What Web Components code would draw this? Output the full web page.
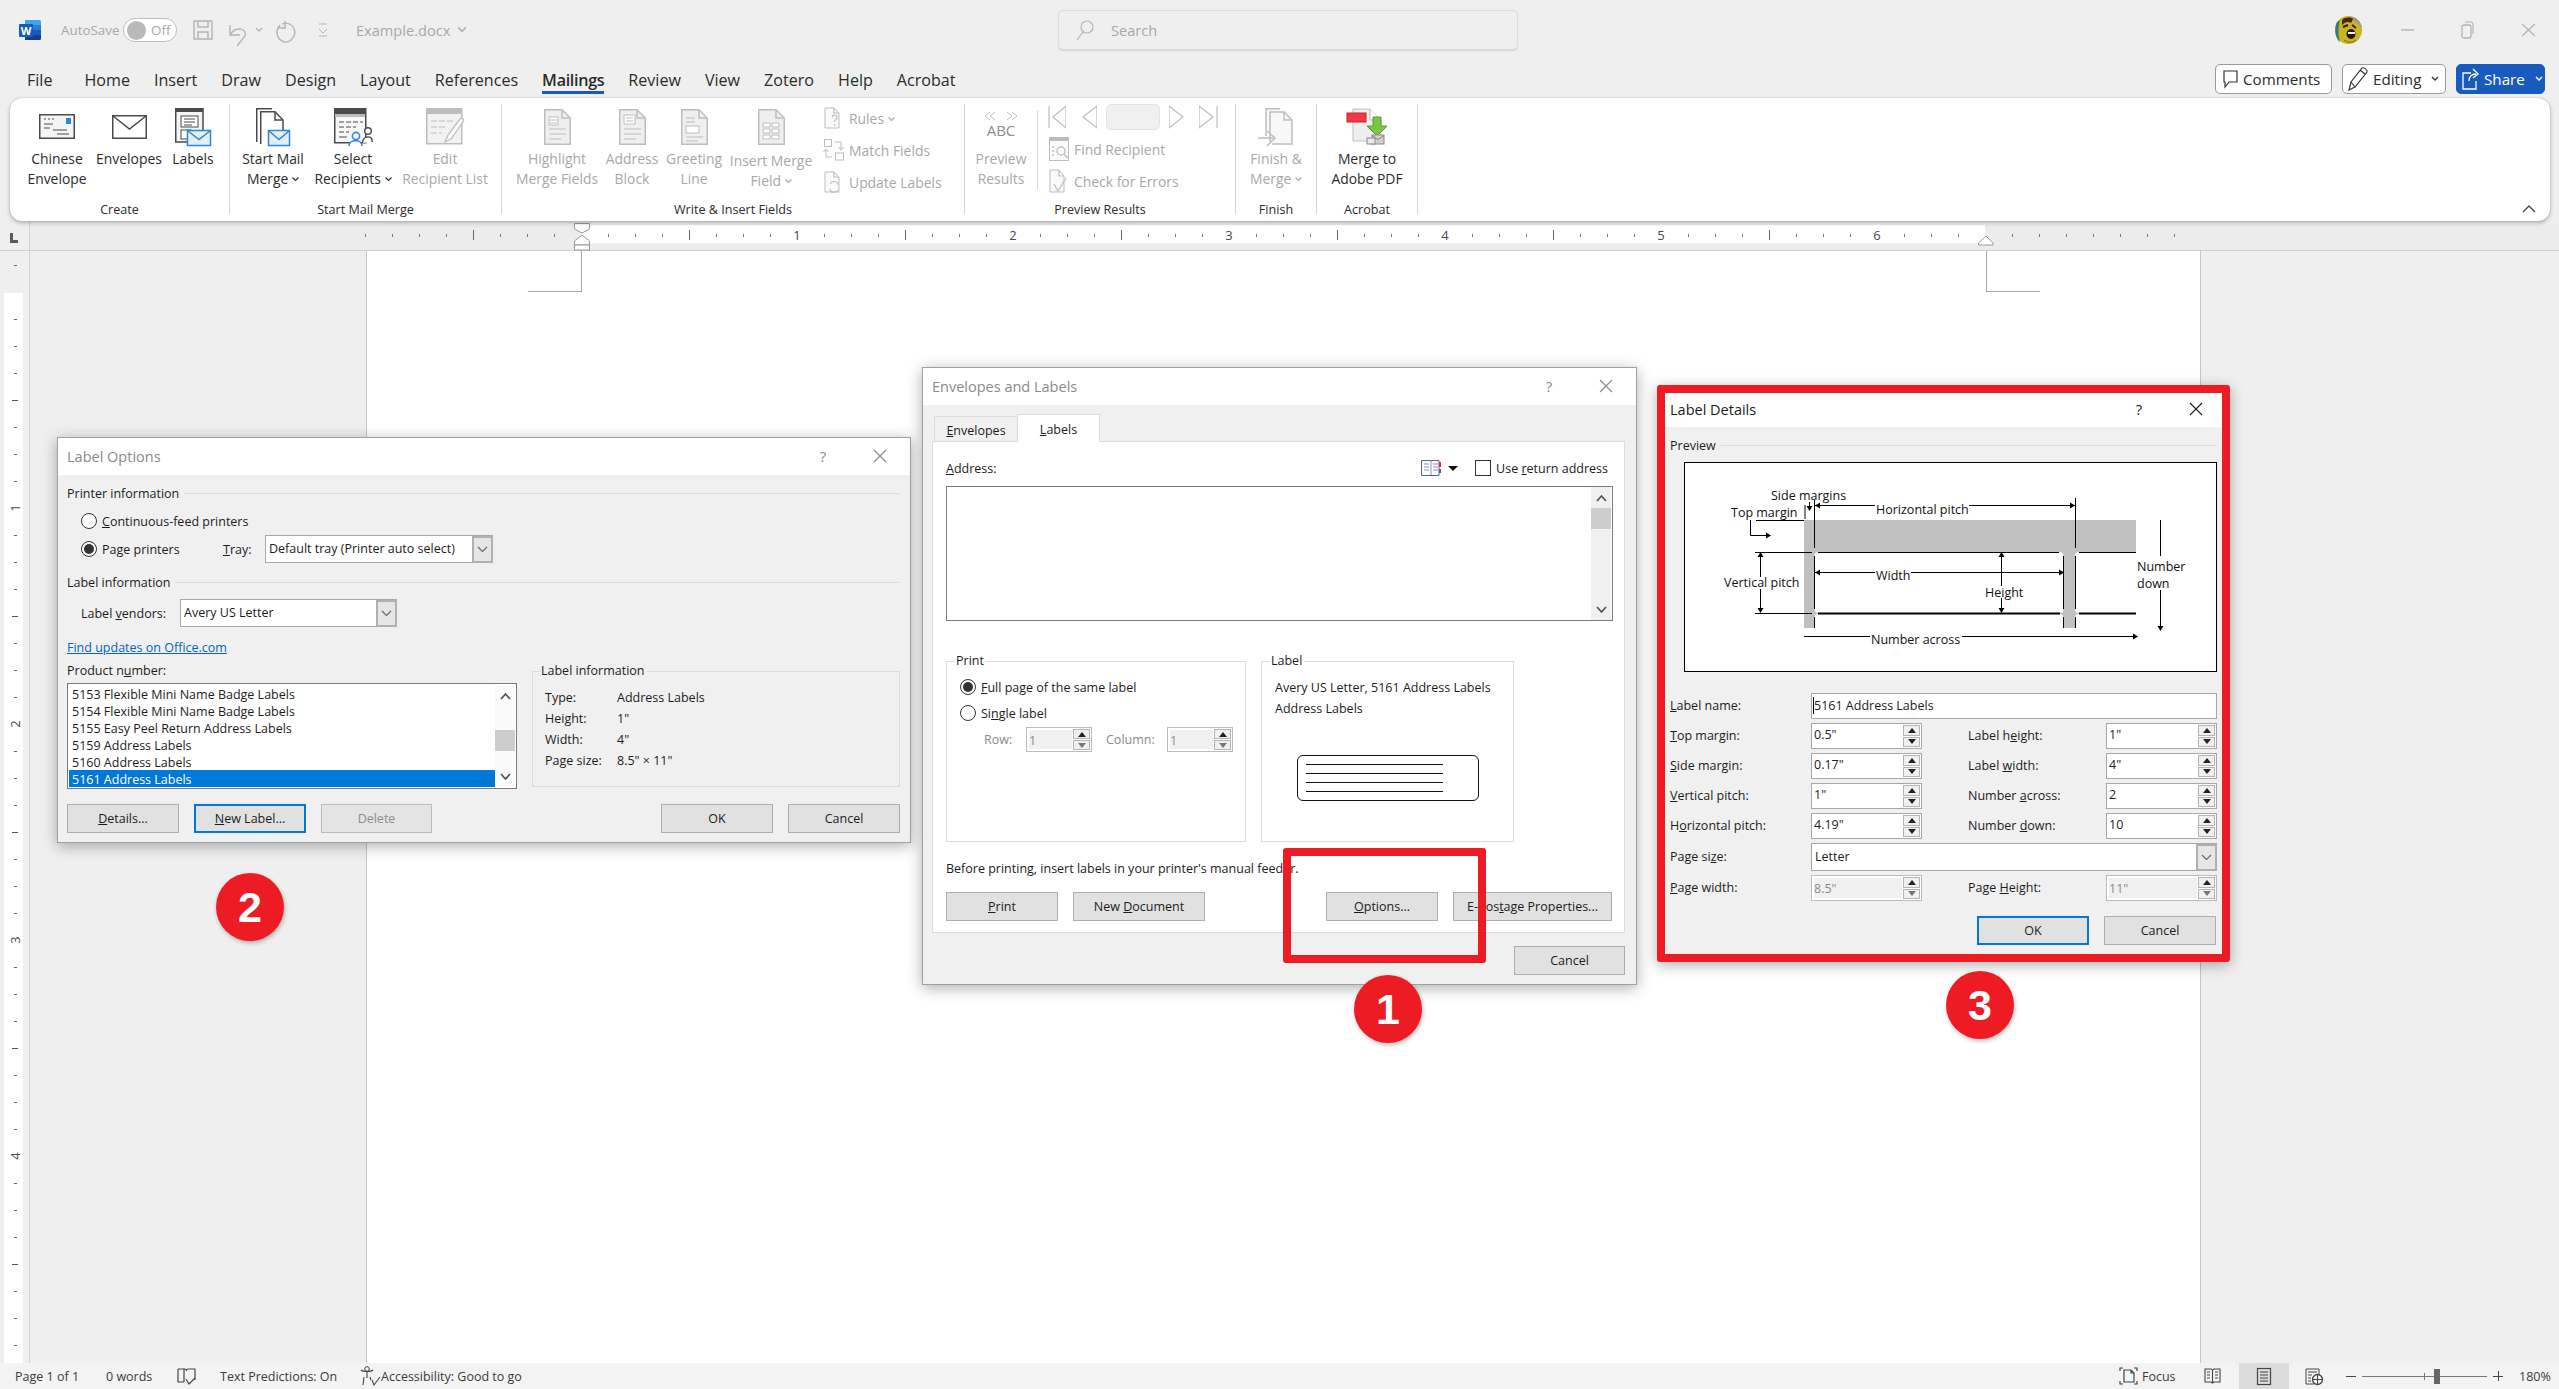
<!DOCTYPE html>
<html lang="en">
<head>
<meta charset="utf-8">
<title>Example.docx - Word</title>
<style>
  html, body { margin:0; padding:0; background:#efefef; }
</style>
</head>
<body>
<word-app>
  <word-titlebar></word-titlebar>
  <word-tabs></word-tabs>
  <word-ribbon>
    <r-group label="Create" w="220" pad="12">
      <r-btn w="70" icon="chinese">Chinese<br>Envelope</r-btn>
      <r-btn w="74" icon="envelope">Envelopes</r-btn>
      <r-btn w="54" icon="labels">Labels</r-btn>
    </r-group>
    <r-group label="Start Mail Merge" w="272">
      <r-btn w="86" icon="startmerge">Start Mail<br>Merge <r-caret></r-caret></r-btn>
      <r-btn w="74" icon="recipients">Select<br>Recipients <r-caret></r-caret></r-btn>
      <r-btn w="110" icon="editlist" disabled>Edit<br>Recipient List</r-btn>
    </r-group>
    <r-group label="Write &amp; Insert Fields" w="463" pad="10">
      <r-btn w="90" icon="highlight" disabled>Highlight<br>Merge Fields</r-btn>
      <r-btn w="60" icon="address" disabled>Address<br>Block</r-btn>
      <r-btn w="64" icon="greeting" disabled>Greeting<br>Line</r-btn>
      <r-btn w="90" icon="insertfield" shift="2" disabled>Insert Merge<br>Field <r-caret></r-caret></r-btn>
      <r-stack>
        <r-small pad="8" icon="rules" disabled>Rules <r-caret></r-caret></r-small>
        <r-small pad="8" icon="match" disabled>Match Fields</r-small>
        <r-small pad="8" icon="update" disabled>Update Labels</r-small>
      </r-stack>
    </r-group>
    <r-group label="Preview Results" w="271">
      <r-btn w="72" icon="abc" disabled>Preview<br>Results</r-btn>
      <r-stack line>
        <r-nav></r-nav>
        <r-small pad="11" icon="find" disabled>Find Recipient</r-small>
        <r-small pad="11" icon="check" disabled>Check for Errors</r-small>
      </r-stack>
    </r-group>
    <r-group label="Finish" w="81">
      <r-btn w="80" icon="finish" disabled>Finish &amp;<br>Merge <r-caret></r-caret></r-btn>
    </r-group>
    <r-group label="Acrobat" w="101">
      <r-btn w="100" icon="pdf">Merge to<br>Adobe PDF</r-btn>
    </r-group>
  </word-ribbon>
  <word-ruler></word-ruler>
  <word-workspace></word-workspace>
  <word-status></word-status>

  <label-options-dialog></label-options-dialog>
  <envelopes-dialog></envelopes-dialog>
  <label-details-dialog></label-details-dialog>

  <red-box style="left:1283px;top:848px;width:203px;height:115px"></red-box>
  <step-badge n="1" style="left:1354px;top:975px"></step-badge>
  <step-badge n="2" style="left:216px;top:873px"></step-badge>
  <step-badge n="3" style="left:1946px;top:971px"></step-badge>
</word-app>

<script>
(()=>{
  const FONT = `"Open Sans","Noto Sans",sans-serif`;
  const line = `fill="none" stroke="currentColor"`;
  const chev = (d)=>`<path d="${d}" fill="none" stroke="currentColor" stroke-width="1.4"/>`;
  const blueEnv = (x,y,w,h)=>`<rect x="${x+.5}" y="${y+.5}" width="${w-1}" height="${h-1}" fill="#e3f0fb" stroke="#2b88d8" stroke-width="1.5"/><path d="M${x+1} ${y+1}L${x+w/2} ${y+h*.6}L${x+w-1} ${y+1}" fill="none" stroke="#2b88d8" stroke-width="1.5"/>`;
  const foldDoc = `<path d="M.75.75H18L26.25 9V35.25H.75Z" fill="#efefef" ${line} stroke-width="1.5"/><path d="M18 .75V9H26.25" ${line} stroke-width="1.5"/>`;

  const ICONS = {
    chinese:[36,25,`<rect x=".75" y=".75" width="34.5" height="23.5" fill="#f4f4f4" ${line} stroke-width="1.5"/><rect x="27" y="4" width="5" height="6" fill="#2b88d8"/><path d="M5 5h2M9 5h2M13 5h2M5 10h9M5 14h6M14 16h14M18 20h12" ${line}/>`],
    envelope:[35,24,`<rect x=".75" y=".75" width="33.5" height="22.5" fill="#fff" ${line} stroke-width="1.5"/><path d="M1 1L17.5 14L34 1" ${line} stroke-width="1.5"/>`],
    labels:[36,38,`<path d="M.75 .75H28V34H.75Z" fill="#f5f5f5" ${line} stroke-width="1.5"/><rect x="1" y="1" width="27" height="3" fill="currentColor"/><rect x="6" y="8" width="17" height="11" fill="#fff" ${line}/><path d="M9 11h11M9 14h11M9 17h8" ${line}/><rect x="6" y="22" width="10" height="9" fill="#fff" ${line}/>${blueEnv(12,22,24,16)}`],
    startmerge:[34,38,`<path d="M.75 34V.75H16" ${line} stroke-width="1.5"/><path d="M4.75 36V3.75H19L27 12V22" fill="#fff" ${line} stroke-width="1.5"/><path d="M19 3.75V12H27" ${line} stroke-width="1.5"/>${blueEnv(12,22,22,16)}`],
    recipients:[38,38,`<rect x=".75" y=".75" width="31" height="34" fill="#f8f8f8" ${line} stroke-width="1.5"/><rect x="1" y="1" width="30" height="5" fill="currentColor"/><rect x="1" y="6" width="30" height="3" fill="#bbb"/><path d="M5 14h5M12 14h5M19 14h5M26 14h3M5 19h5M12 19h5M19 19h3M5 24h5M12 24h3M5 29h8" ${line}/><circle cx="34" cy="23" r="3.3" fill="#fff" ${line} stroke-width="1.4"/><path d="M28.500 35c0-8 11-8 9.500-1" fill="#fff" ${line} stroke-width="1.4"/><circle cx="22" cy="28" r="3.600" fill="#fff" stroke="#2b88d8" stroke-width="1.6"/><path d="M15 38c0-7 13-7 13 0" fill="#fff" stroke="#2b88d8" stroke-width="1.6"/>`],
    editlist:[38,38,`<rect x=".75" y=".75" width="35" height="35" fill="#f2f2f2" ${line} stroke-width="1.5"/><rect x="1" y="1" width="34" height="5" fill="currentColor"/><path d="M5 13h6M13 13h6M21 13h6M5 19h6M13 19h6M5 25h6M13 25h3" ${line}/><path d="M19 34L22 27L34 11C36 9 39 12 37 14L25 31Z" fill="#fff" ${line} stroke-width="1.3"/>`],
    highlight:[27,36,`${foldDoc}<rect x="5" y="8" width="9" height="8" fill="#fff" ${line}/><path d="M6 11h7M6 14h7M5 20h17M5 25h17M5 30h12" ${line}/>`],
    address:[27,36,`${foldDoc}<rect x="5" y="6" width="11" height="9" fill="#fff" ${line}/><path d="M7 9h7M7 12h7M5 20h17M5 25h17M5 30h12" ${line}/>`],
    greeting:[27,36,`${foldDoc}<path d="M5 9h9M5 13h9" ${line}/><rect x="5" y="17" width="13" height="7" fill="#fff" ${line}/><path d="M5 28h17M5 32h12" ${line}/>`],
    insertfield:[27,36,`${foldDoc}<path d="M5 14h7v4H5zM14 14h7v4h-7zM5 20h7v4H5zM14 20h7v4h-7zM5 26h7v4H5zM14 26h7v4h-7z" fill="#fff" ${line}/>`],
    rules:[18,22,`<path d="M1 1H10L15 6V21H1Z" fill="#fafafa" ${line}/><path d="M10 1V6H15M8 10c1-3 6-2 5 1c-.5 2-2.500 2-2.500 4M10.500 17v2" ${line} stroke-width="1.2"/>`],
    match:[20,22,`<rect x=".5" y=".5" width="7" height="7" fill="none" ${line}/><rect x="11.500" y="14" width="8" height="7" fill="none" ${line}/><path d="M11 3h6v7M14.500 8L17 11L19.500 8M8 18H2V11M-.5 13L2 10L4.500 13" ${line}/>`],
    update:[18,22,`<path d="M1 1H10L15 6V21H1Z" fill="#fafafa" ${line}/><path d="M10 1V6H15M6 13c2-4 8-3 8 1M14 19c-2 3-8 3-8-1" ${line} stroke-width="1.2"/>`],
    find:[20,24,`<rect x=".5" y=".5" width="19" height="23" fill="#fafafa" ${line}/><rect x="1" y="1" width="18" height="3" fill="currentColor"/><circle cx="12" cy="14" r="4" fill="#fff" ${line} stroke-width="1.3"/><path d="M15 17l3.500 4M3 10h2M3 14h2M3 18h2" ${line} stroke-width="1.3"/>`],
    check:[18,24,`<path d="M1 1H10L15 7V23H1Z" fill="#fafafa" ${line}/><path d="M10 1V7H15M5 15l4 7l8-13" ${line} stroke-width="1.2"/>`],
    abc:[40,36,`<path d="M9 3L4 7L9 11M14 3L9 7L14 11M26 3L31 7L26 11M31 3L36 7L31 11" ${line}/><text x="20" y="27" text-anchor="middle" font-size="15" fill="#8d8d8d" font-family='${FONT}'>ABC</text>`],
    finish:[36,38,`<path d="M8 28V.75H22M12 34V4H26L34 12V36H14" fill="#f8f8f8" ${line} stroke-width="1.5"/><path d="M26 4V12H34" ${line} stroke-width="1.5"/><path d="M0 30H15M9 23L17 30L9 38" ${line} stroke-width="1.5" fill="#fff"/>`],
    pdf:[42,38,`<path d="M7 1H24L35 12V33H7Z" fill="#eee" stroke="#bdbdbd"/><path d="M24 1V12H35" fill="#fff" stroke="#bdbdbd"/><rect x="1" y="5" width="19" height="9" fill="#ed3a45" stroke="#c22"/><path d="M27 9H35V18H41L31 28L21 18H27Z" fill="#7cc544" stroke="#5a9e2c"/><rect x="26" y="27" width="12" height="9" fill="#d0d0d0" stroke="#888"/><rect x="21" y="30" width="8" height="6" fill="#e8e8e8" stroke="#888"/><path d="M26 27.500l6 4l6-4" fill="none" stroke="#888"/>`],
    // title bar
    save:[20,20,`<path d="M1 1H19V19H1ZM5 1V7H15V1M5 19V12H15V19" ${line} stroke-width="1.4"/>`],
    undo:[20,26,`<path d="M2 14C8 4 20 8 17 15L9 25M2 4V14H12" ${line} stroke-width="1.4"/>`],
    redo:[22,24,`<path d="M7 4C18 1 24 12 16 20C10 25 2 20 2 12c0-3 1-5 3-7M10 1V8H3" ${line} stroke-width="1.4"/>`],
    chevdown:[8,6,chev("M1 1L4 4L7 1")],
    custom:[10,14,`<path d="M1 1h8M1 6L5 10L9 6M1 13h8" ${line}/>`],
    search:[18,22,`<circle cx="11" cy="8" r="6" ${line} stroke-width="1.2"/><path d="M7 13L1 21" ${line} stroke-width="1.2"/>`],
    min:[13,2,`<path d="M0 1h13" ${line} stroke-width="1.4"/>`],
    restore:[13,18,`<rect x="1" y="4" width="9" height="13" rx="2" ${line} stroke-width="1.3"/><path d="M4 1H10C12 1 12 2 12 4V13" ${line} stroke-width="1.2"/>`],
    close:[15,14,`<path d="M1 1L14 13M14 1L1 13" ${line} stroke-width="1.3"/>`],
    comment:[15,18,`<path d="M1 1H14V12H6L2 17V12H1Z" ${line} stroke-width="1.2"/>`],
    pencil:[20,24,`<path d="M1 23L3 15L14 1C16 0 20 3 19 5L7 20ZM3 15L7 20M12 3L17 7" ${line} stroke-width="1.2"/>`],
    share:[16,22,`<path d="M9 5H1V21H14V13M7 13C7 8 10 6 14 6M11 1L16 6L11 10" ${line} stroke-width="1.3"/>`],
    // status bar
    bookcheck:[19,17,`<path d="M1 1H8C9 1 9.500 2 9.500 3C9.500 2 10 1 11 1H18V12M1 1V14H7M7 1V14" ${line} stroke-width="1.2"/><path d="M9 11l3 5l6-6" ${line} stroke-width="1.2"/>`],
    person:[21,20,`<circle cx="7" cy="3" r="2.300" ${line}/><path d="M1 4C3 6 11 6 13 4M7 6v6M4 11l-1 8M10 11l1 3M12 14l2 5l6-8" ${line} stroke-width="1.100"/>`],
    focus:[19,18,`<path d="M1 4V1H4M15 1H18V4M1 14V17H4M15 17H18V14M5 3H12L15 6V15H5ZM12 3V6H15" ${line} stroke-width="1.2"/>`],
    read:[17,16,`<path d="M1 1H7L8.500 2L10 1H16V14H10L8.500 15L7 14H1ZM8.500 2V15M3 4h3M3 7h3M3 10h3M11 4h3M11 7h3M11 10h3" ${line} stroke-width="1.1"/>`],
    print:[14,17,`<rect x=".5" y=".5" width="13" height="16" ${line} stroke-width="1.200"/><path d="M3 4h8M3 7h8M3 10h8M3 13h8" ${line} stroke-width="1.200"/>`],
    web:[18,17,`<path d="M9 16H1V1H14V7" ${line}/><path d="M3 4h9M3 7h4M3 10h3M3 13h3" ${line}/><circle cx="12.500" cy="11.500" r="5" fill="#f3f3f3" stroke="#444" stroke-width="1.3"/><path d="M7.500 11.500h10M12.500 6.500v10" ${line}/>`]
  };

  const baseCss = `:host{box-sizing:border-box}*{box-sizing:border-box}`;
  const shadow = (el, css, html)=>{
    const root = el.attachShadow({mode:"open"});
    const template = document.createElement("template");
    template.innerHTML = `<style>${baseCss}${css}</style>${html}`;
    root.appendChild(template.content.cloneNode(true));
    return root;
  };

  class RIcon extends HTMLElement {
    connectedCallback(){
      const [w,h,body] = ICONS[this.getAttribute("name")];
      shadow(this, `:host{display:inline-flex;flex:none;color:var(--icon,#4a4a4a)}svg{display:block;overflow:visible}`,
        `<svg width="${w}" height="${h}" viewBox="0 0 ${w} ${h}" aria-hidden="true">${body}</svg>`);
    }
  }
  customElements.define("r-icon",RIcon);

  class WordApp extends HTMLElement {
    connectedCallback(){
      shadow(this, `:host{display:flex;flex-direction:column;position:relative;width:2559px;height:1389px;overflow:hidden;
        background:#efefef;font-family:${FONT};color:#262626}`, `<slot></slot>`);
    }
  }

  class WordTitlebar extends HTMLElement {
    connectedCallback(){
      shadow(this, `
        :host{display:flex;align-items:center;height:60px;padding-left:19px;flex:none;--icon:#b4b4b4;color:#a8a8a8;font-size:13.4px}
        .word{width:22px;height:20px;display:block}
        .auto{width:62px;margin-left:20px}
        .toggle{display:flex;align-items:center;width:54px;height:24px;border:1px solid #bdbdbd;border-radius:12px;background:#fff;padding-left:3px;gap:5px;margin-right:16px}
        .knob{width:19px;height:19px;border-radius:50%;background:#b9b9b9}
        .doc{width:100px;margin-left:28px;font-size:14.6px}
        .search{display:flex;align-items:center;width:460px;height:40px;margin-left:592px;padding-left:17px;gap:17px;font-size:14.6px;
          border:1px solid #dcdcdc;border-radius:5px;box-shadow:0 1px 1px #cfcfcf}
        svg.face{margin-left:817px;width:27px;height:28px;display:block}
      `,`
        <svg class="word" viewBox="0 0 22 20">
          <path d="M6 0H20.500Q22 0 22 1.500V5H6Z" fill="#41a5ee"/><rect x="6" y="5" width="16" height="5" fill="#2b7cd3"/>
          <rect x="6" y="10" width="16" height="5" fill="#185abd"/><path d="M6 15H22V18.500Q22 20 20.500 20H6Z" fill="#103f91"/>
          <rect x="0" y="4" width="14" height="13" rx="1" fill="#185abd"/>
          <text x="7" y="14.500" text-anchor="middle" font-size="11" font-weight="700" fill="#fff" font-family='${FONT}'>W</text>
        </svg>
        <span class="auto">AutoSave</span>
        <span class="toggle"><span class="knob"></span>Off</span>
        <r-icon name="save"></r-icon>
        <r-icon name="undo" style="margin-left:15px;margin-top:8px"></r-icon>
        <r-icon name="chevdown" style="margin-left:7px"></r-icon>
        <r-icon name="redo" style="margin-left:12px;margin-top:4px"></r-icon>
        <r-icon name="custom" style="margin-left:21px"></r-icon>
        <span class="doc">Example.docx</span>
        <r-icon name="chevdown" style="margin-left:2px;transform:scale(1.3)"></r-icon>
        <span class="search"><r-icon name="search"></r-icon>Search</span>
        <svg class="face" viewBox="0 0 27 28">
          <ellipse cx="13.500" cy="14" rx="13.500" ry="14" fill="#c9b422"/>
          <path d="M2 6C-1 12 0 22 5 26C3 20 3 12 5 4Z" fill="#2e8072"/><path d="M13 1C20 0 26 5 27 12C22 6 18 4 13 1Z" fill="#a09a84"/>
          <path d="M7 4C10 1 15 1 18 3L16 7C13 5 10 6 7 9Z" fill="#4a2a12"/><path d="M8 11l5-2M17 9l4 3" stroke="#3a1c0c" stroke-width="2"/>
          <ellipse cx="16" cy="18" rx="4.500" ry="5" fill="#2b1108"/><path d="M13 16h7v2h-7z" fill="#f5f0e6"/><path d="M9 24C13 27 18 27 21 24" stroke="#7a6a10" fill="none"/>
        </svg>
        <r-icon name="min" style="margin-left:39px"></r-icon>
        <r-icon name="restore" style="margin-left:47px"></r-icon>
        <r-icon name="close" style="margin-left:47px"></r-icon>`);
    }
  }

  class WordTabs extends HTMLElement {
    connectedCallback(){
      const names = ["File","Home","Insert","Draw","Design","Layout","References","Mailings","Review","View","Zotero","Help","Acrobat"];
      shadow(this, `
        :host{display:flex;height:38px;flex:none;padding-left:27px;padding-right:14px;font-size:16.1px;color:#2b2b2b}
        .tab{position:relative;margin-right:24px;height:34px;line-height:40px;white-space:nowrap}
        .tab.first{margin-right:32px}
        .tab.on{font-weight:600;letter-spacing:-.3px}
        .tab.on::after{content:"";position:absolute;left:0;right:0;top:31px;height:3px;background:#185abd}
        .right{margin-left:auto;display:flex;gap:10px;padding-top:4px;--icon:#333}
        .b{display:flex;align-items:center;height:30px;border:1px solid #9a9a9a;border-radius:5px;background:#fff;font-size:15.200px;white-space:nowrap}
        .share{background:#185abd;border-color:#185abd;color:#fff;--icon:#fff;width:89px;padding-left:5px;gap:6px}
      `,`
        ${names.map((n,i)=>`<span class="tab${i===0?" first":""}${n==="Mailings"?" on":""}">${n}</span>`).join("")}
        <div class="right">
          <span class="b" style="width:117px;padding-left:7px;gap:5px"><r-icon name="comment"></r-icon>Comments</span>
          <span class="b" style="width:104px;padding-left:5px;gap:5px"><r-icon name="pencil"></r-icon>Editing<r-icon name="chevdown" style="margin-left:5px;--icon:#333"></r-icon></span>
          <span class="b share"><r-icon name="share"></r-icon>Share<r-icon name="chevdown" style="margin-left:4px"></r-icon></span>
        </div>`);
    }
  }

  class WordRibbon extends HTMLElement {
    connectedCallback(){
      shadow(this, `
        :host{display:flex;flex:none;position:relative;z-index:2;height:123px;margin:0 9px 0 10px;padding-top:4px;
          background:#fff;border-radius:12px;box-shadow:0 0 1px #9c9c9c,0 2px 4px rgba(0,0,0,.28)}
        svg{position:absolute;right:14px;top:106px;color:#444}
      `,`<slot></slot><svg width="14" height="9" viewBox="0 0 14 9"><path d="M1 8L7 2L13 8" fill="none" stroke="currentColor" stroke-width="1.400"/></svg>`);
    }
  }

  class RGroup extends HTMLElement {
    connectedCallback(){
      this.style.width = this.getAttribute("w")+"px";
      shadow(this, `
        :host{display:flex;flex:none}
        .col{flex:1;min-width:0;display:flex;flex-direction:column}
        .body{display:flex;height:99px;padding-left:${this.getAttribute("pad")||0}px}
        .label{height:18px;line-height:18px;text-align:center;font-size:12.6px;color:#2b2b2b;white-space:nowrap}
        .sep{flex:none;width:1px;height:110px;margin-top:2px;background:#d6d6d6}
      `,`<div class="col"><div class="body"><slot></slot></div><div class="label">${this.getAttribute("label").replace("&","&amp;")}</div></div><div class="sep"></div>`);
    }
  }

  class RBtn extends HTMLElement {
    connectedCallback(){
      this.style.width = this.getAttribute("w")+"px";
      const shift = this.getAttribute("shift")||0;
      shadow(this, `
        :host{display:flex;flex-direction:column;align-items:center;flex:none;color:#2b2b2b}
        :host([disabled]){color:#a8a8a8;--icon:#bdbdbd}
        .icon{display:flex;align-items:center;justify-content:center;height:47px;padding-top:2px}
        .text{font-size:13.9px;line-height:20px;text-align:center;white-space:nowrap;padding-top:${shift}px}
      `,`<div class="icon"><r-icon name="${this.getAttribute("icon")}"></r-icon></div><div class="text"><slot></slot></div>`);
    }
  }

  class RCaret extends HTMLElement {
    connectedCallback(){
      shadow(this, `:host{display:inline-block;vertical-align:2px}svg{display:block}`,
        `<svg width="7" height="5" viewBox="0 0 7 5"><path d="M.5 .5L3.500 3.500L6.500 .5" fill="none" stroke="currentColor" stroke-width="1.100"/></svg>`);
    }
  }

  class RStack extends HTMLElement {
    connectedCallback(){
      shadow(this, `:host{display:flex;flex-direction:column;flex:none}
        :host([line]){position:relative;border-left:1px solid transparent}
        .v{position:absolute;left:-1px;top:9px;width:1px;height:78px;background:#d6d6d6}`,
        `${this.hasAttribute("line")?`<div class="v"></div>`:""}<slot></slot>`);
    }
  }

  class RSmall extends HTMLElement {
    connectedCallback(){
      shadow(this, `
        :host{display:flex;align-items:center;height:32px;padding-left:${this.getAttribute("pad")||0}px;font-size:13.9px;white-space:nowrap}
        :host([disabled]){color:#a8a8a8;--icon:#bdbdbd}
        .i{width:25px;display:flex}
      `,`<span class="i"><r-icon name="${this.getAttribute("icon")}"></r-icon></span><span><slot></slot></span>`);
    }
  }

  class RNav extends HTMLElement {
    connectedCallback(){
      shadow(this, `
        :host{display:flex;align-items:center;height:32px;padding-left:10px;color:#bdbdbd;margin-top:-1px}
        svg{display:block;flex:none}
        .box{width:54px;height:26px;margin:0 9px;background:#f0f0f0;border:1px solid #e2e2e2;border-radius:5px}
      `,`
        <svg width="18" height="24" viewBox="0 0 18 24"><path d="M1 1V23M18 1L5 12L18 23Z" fill="none" stroke="currentColor" stroke-width="1.200"/></svg>
        <svg width="15" height="24" viewBox="0 0 15 24" style="margin-left:16px"><path d="M15 1L1 12L15 23Z" fill="none" stroke="currentColor" stroke-width="1.200"/></svg>
        <span class="box"></span>
        <svg width="15" height="24" viewBox="0 0 15 24"><path d="M0 1L14 12L0 23Z" fill="none" stroke="currentColor" stroke-width="1.200"/></svg>
        <svg width="19" height="24" viewBox="0 0 19 24" style="margin-left:15px"><path d="M18 1V23M0 1L14 12L0 23Z" fill="none" stroke="currentColor" stroke-width="1.200"/></svg>`);
    }
  }

  class WordRuler extends HTMLElement {
    connectedCallback(){
      let ticks = "";
      for(let x=365, i=0; x<=2174; x+=27, i++){
        const inch = (x-581)%216===0 && x>=797 && x<=1877;
        const half = (x-689)%216===0;
        if(x===581 || x===1985) continue;
        if(inch) ticks += `<text x="${x}" y="19" text-anchor="middle" font-size="13" fill="#4a4a4a">${(x-581)/216}</text>`;
        else if(half) ticks += `<path d="M${x+.5} 9v10" stroke="#666"/>`;
        else ticks += `<path d="M${x+.5} 13v3" stroke="#777"/>`;
      }
      shadow(this, `:host{display:block;flex:none;height:30px}svg{display:block}`,`
        <svg width="2559" height="30" viewBox="0 0 2559 30" font-family='${FONT}'>
          <rect x="30" y="4" width="2529" height="25" fill="#ececec"/>
          <rect x="581" y="4" width="1404" height="18" fill="#fff"/>
          <path d="M0 29.500H2559" stroke="#cfcfcf"/><path d="M29.500 0V30" stroke="#d4d4d4"/>
          <path d="M10 12h3v7h5v3h-8z" fill="#5a5a5a"/>
          ${ticks}
          <g fill="#fff" stroke="#9a9a9a"><path d="M574.500 2.500H589.500V8L582 12L574.500 8Z"/><path d="M582 14L589.500 20V24H574.500V20Z"/><rect x="574.500" y="24" width="15" height="5"/><path d="M1986 15L1993 22V24H1978.500V22Z"/></g>
        </svg>`);
    }
  }

  class WordWorkspace extends HTMLElement {
    connectedCallback(){
      let ticks = "";
      for(let y=292-27*2; y<1363; y+=27){
        const t = y-251;
        if(t<0 || y===292) continue;
        const inch = (y-292)%216===0 && y>292;
        const half = (y-400)%216===0;
        if(inch) ticks += `<text transform="translate(15 ${t}) rotate(-90)" text-anchor="middle" y="4.500" font-size="13" fill="#4a4a4a">${(y-292)/216}</text>`;
        else if(half) ticks += `<path d="M12 ${t+.5}h6" stroke="#555"/>`;
        else ticks += `<path d="M14 ${t+.5}h3" stroke="#666"/>`;
      }
      shadow(this, `
        :host{display:flex;flex:none;height:1112px}
        svg{display:block;flex:none}
        .page{width:1835px;margin-left:336px;height:100%;background:#fff;border-left:1px solid #c6c6c6;border-right:1px solid #c6c6c6;display:flex;align-items:flex-start}
        .crop{height:41px;width:54px;border-bottom:1px solid #a8a8a8}
        .l{margin-left:161px;border-right:1px solid #a8a8a8}
        .r{margin-left:1404px;border-left:1px solid #a8a8a8}
      `,`
        <svg width="30" height="1112" viewBox="0 0 30 1112" font-family='${FONT}'>
          <rect x="4" y="42" width="19" height="1070" fill="#fff"/>
          <path d="M29.500 0V1112" stroke="#d4d4d4"/>
          ${ticks}
        </svg>
        <div class="page"><div class="crop l"></div><div class="crop r"></div></div>`);
    }
  }

  class WordStatus extends HTMLElement {
    connectedCallback(){
      shadow(this, `
        :host{display:flex;align-items:center;flex:none;height:26px;background:#f3f3f3;font-size:12.500px;color:#3a3a3a;--icon:#444;padding-left:15px;white-space:nowrap}
        .t{display:block}
        .view{width:50px;height:26px;margin-left:18px;background:#dcdcdc;display:flex;align-items:center;justify-content:center}
        .slider{position:relative;width:125px;height:1px;background:#777;margin:0 6px}
        .slider i{position:absolute;left:62px;top:-3px;width:1px;height:7px;background:#777}
        .slider b{position:absolute;left:72px;top:-7px;width:6px;height:15px;background:#666}
        .m{width:10px;height:1px;background:#444;position:relative}
        .m.p::after{content:"";position:absolute;left:4.500px;top:-4.500px;width:1px;height:10px;background:#444}
      `,`
        <span class="t" style="width:91px">Page 1 of 1</span>
        <span class="t" style="width:71px">0 words</span>
        <r-icon name="bookcheck"></r-icon>
        <span class="t" style="margin-left:24px;width:140px">Text Predictions: On</span>
        <r-icon name="person"></r-icon>
        <span class="t" style="width:1738px">Accessibility: Good to go</span>
        <r-icon name="focus"></r-icon>
        <span class="t" style="margin-left:4px;width:62px">Focus</span>
        <r-icon name="read"></r-icon>
        <span class="view"><r-icon name="print"></r-icon></span>
        <r-icon name="web" style="margin-left:16px"></r-icon>
        <span class="m" style="margin-left:23px"></span>
        <span class="slider"><i></i><b></b></span>
        <span class="m p"></span>
        <span class="t" style="margin-left:16px">180%</span>`);
    }
  }

  // dialog controls
  class WDialog extends HTMLElement {
    connectedCallback(){
      shadow(this, `
        :host{display:flex;flex-direction:column;width:100%;height:100%;background:#f0f0f0;border:1px solid #a0a0a0;
          box-shadow:0 3px 14px rgba(0,0,0,.32);font-size:12.500px;color:#1c1c1c}
        :host([marked]){border:8px solid #ed1c24;border-radius:3px}
        .title{flex:none;display:flex;align-items:center;height:37px;background:#fff;padding:0 0 1px 9px;font-size:14.500px;color:#8a8a8a}
        :host([marked]) .title{height:34px;padding:0 0 2px 5px;color:#1c1c1c}
        .q{margin-left:auto;width:54px;text-align:center;font-size:15px}
        .x{width:60px;display:flex;justify-content:center}
        :host([marked]) .q{width:62px}
        :host([marked]) .x{width:52px}
        svg{display:block}
      `,`
        <div class="title"><span>${this.getAttribute("heading")}</span><span class="q">?</span>
          <span class="x"><svg width="14" height="14" viewBox="0 0 14 14"><path d="M1 1L13 13M13 1L1 13" fill="none" stroke="currentColor" stroke-width="1.100"/></svg></span></div>
        <slot></slot>`);
    }
  }

  class WBtn extends HTMLElement {
    connectedCallback(){
      this.style.width = this.getAttribute("w")+"px";
      shadow(this, `
        :host{display:flex;align-items:center;justify-content:center;flex:none;height:29px;background:#e1e1e1;border:1px solid #adadad;white-space:nowrap;color:#1c1c1c}
        :host([primary]){border:2px solid #0078d7}
        :host([disabled]){color:#8c8c8c;background:#e4e4e4;border-color:#bcbcbc}
      `,`<span><slot></slot></span>`);
    }
  }

  class WHead extends HTMLElement {
    connectedCallback(){
      shadow(this, `:host{display:flex;align-items:center;gap:5px;height:18px;white-space:nowrap}i{flex:1;height:1px;background:#dcdcdc}`,`<span><slot></slot></span><i></i>`);
    }
  }

  class WRadio extends HTMLElement {
    connectedCallback(){
      shadow(this, `
        :host{display:inline-flex;align-items:center;gap:5px;height:18px;white-space:nowrap}
        b{flex:none;display:flex;align-items:center;justify-content:center;width:16px;height:16px;border-radius:50%;border:1px solid #333;background:#fff}
        :host([on]) b::after{content:"";width:10px;height:10px;border-radius:50%;background:#333}
      `,`<b></b><span><slot></slot></span>`);
    }
  }

  class WSpin extends HTMLElement {
    connectedCallback(){
      shadow(this, `
        :host{display:flex;height:26px;background:#fff;border:1px solid #a8a8a8;font-size:12.500px;min-width:0}
        :host([disabled]){color:#8a8a8a;border-color:#bcbcbc}
        :host([disabled]) .v{background:#f0f0f0;margin:2px 0 2px 2px;padding-left:0}
        .v{flex:1;line-height:22px;padding-left:2px;white-space:nowrap}
        .s{flex:none;width:19px;display:flex;flex-direction:column;gap:1px;padding:1px;margin-left:auto}
        .s b{flex:1;display:flex;align-items:center;justify-content:center;background:#f0f0f0;border:1px solid #b4b4b4}
        .s b::after{content:"";border:4px solid transparent;border-top:0;border-bottom:5px solid #222}
        .s b+b::after{border-top:5px solid #222;border-bottom:0}
        :host([disabled]) .s b+b::after{border-top-color:#777}
      `,`<span class="v">${this.getAttribute("value")||""}</span><span class="s"><b></b><b></b></span>`);
    }
  }

  class WSelect extends HTMLElement {
    connectedCallback(){
      shadow(this, `
        :host{display:flex;height:28px;background:#fff;border:1px solid #a8a8a8}
        .v{flex:1;line-height:26px;padding-left:3px;white-space:nowrap}
        .a{flex:none;width:21px;display:flex;align-items:center;justify-content:center;background:#e6e6e6;border:2px solid #b0b0b0;margin:0 -1px -1px 0;color:#666}
        svg{display:block}
      `,`<span class="v"><slot></slot></span><span class="a"><svg width="11" height="7" viewBox="0 0 11 7"><path d="M1 1L5.500 5.500L10 1" fill="none" stroke="currentColor" stroke-width="1.100"/></svg></span>`);
    }
  }

  class WScroll extends HTMLElement {
    connectedCallback(){
      shadow(this, `
        :host{display:flex;flex-direction:column;flex:none;width:20px;background:var(--track,#f0f0f0);color:#555}
        .b{flex:none;height:21px;display:flex;align-items:center;justify-content:center}
        .t{flex:none;height:21px;background:#cdcdcd;margin-top:${this.getAttribute("offset")||0}px}
        .b.d{margin-top:auto}
        svg{display:block}
      `,`
        <span class="b"><svg width="11" height="8" viewBox="0 0 11 8"><path d="M1 7L5.500 2L10 7" fill="none" stroke="currentColor" stroke-width="1.800"/></svg></span>
        <span class="t"></span>
        <span class="b d"><svg width="11" height="8" viewBox="0 0 11 8"><path d="M1 1L5.500 6L10 1" fill="none" stroke="currentColor" stroke-width="1.800"/></svg></span>`);
    }
  }

  const fieldsetCss = `
    fieldset{margin:0;border:1px solid #dcdcdc;min-width:0}
    legend{padding:0 2px 0 1px;margin-left:-5px;line-height:18px}
  `;

  class LabelOptionsDialog extends HTMLElement {
    connectedCallback(){
      shadow(this, `
        :host{position:absolute;left:57px;top:437px;width:854px;height:406px;z-index:5}
        ${fieldsetCss}
        .b{display:flex;flex-direction:column;padding:9px 10px 0 9px}
        .row{display:flex;align-items:center}
        .link{margin-top:12px;line-height:18px;color:#0563c1;text-decoration:underline}
        .cols{display:flex;gap:15px;margin-top:5px}
        .left{width:450px;flex:none}
        .list{display:flex;height:106px;margin-top:3px;border:1px solid #7a7a7a;background:#fff;padding:1px;--track:#fafafa}
        .items{flex:1}
        .items div{height:17px;line-height:19px;padding-left:3px}
        .items .sel{background:#0078d7;color:#fff}
        fieldset{width:368px;height:125px;padding:7px 0 0 12px}
        .kv{display:flex;line-height:21px}.kv span:first-child{width:72px}
        .btns{display:flex;gap:15px;margin-top:15px}
      `,`
      <w-dialog heading="Label Options">
        <div class="b">
          <w-head>Printer information</w-head>
          <div class="row" style="margin-top:10px;padding-left:14px"><w-radio><u>C</u>ontinuous-feed printers</w-radio></div>
          <div class="row" style="margin-top:5px;padding-left:14px">
            <w-radio on style="width:142px">Pa<u>g</u>e printers</w-radio>
            <span style="width:42px"><u>T</u>ray:</span>
            <w-select style="width:228px">Default tray (Printer auto select)</w-select>
          </div>
          <w-head style="margin-top:10px">Label information</w-head>
          <div class="row" style="margin-top:8px;padding-left:14px">
            <span style="width:99px">Label <u>v</u>endors:</span>
            <w-select style="width:217px">Avery US Letter</w-select>
          </div>
          <span class="link">Find updates on Office.com</span>
          <div class="cols">
            <div class="left">
              <div style="line-height:18px">Product n<u>u</u>mber:</div>
              <div class="list">
                <div class="items">
                  <div>5153 Flexible Mini Name Badge Labels</div>
                  <div>5154 Flexible Mini Name Badge Labels</div>
                  <div>5155 Easy Peel Return Address Labels</div>
                  <div>5159 Address Labels</div>
                  <div>5160 Address Labels</div>
                  <div class="sel">5161 Address Labels</div>
                </div>
                <w-scroll offset="24"></w-scroll>
              </div>
            </div>
            <fieldset><legend>Label information</legend>
              <div class="kv"><span>Type:</span><span>Address Labels</span></div>
              <div class="kv"><span>Height:</span><span>1"</span></div>
              <div class="kv"><span>Width:</span><span>4"</span></div>
              <div class="kv"><span>Page size:</span><span>8.5" × 11"</span></div>
            </fieldset>
          </div>
          <div class="btns">
            <w-btn w="112"><u>D</u>etails...</w-btn>
            <w-btn w="112" primary><u>N</u>ew Label...</w-btn>
            <w-btn w="111" disabled>Delete</w-btn>
            <w-btn w="112" style="margin-left:auto">OK</w-btn>
            <w-btn w="112">Cancel</w-btn>
          </div>
        </div>
      </w-dialog>`);
    }
  }

  class EnvelopesDialog extends HTMLElement {
    connectedCallback(){
      shadow(this, `
        :host{position:absolute;left:922px;top:367px;width:715px;height:618px;z-index:5}
        ${fieldsetCss}
        .b{display:flex;flex-direction:column;padding:9px 11px 0 9px}
        .tabs{display:flex;padding-left:2px;height:28px;position:relative;z-index:1}
        .tab{width:83px;height:26px;margin-top:2px;border:1px solid #dcdcdc;border-bottom:0;border-right:0;text-align:center;line-height:28px}
        .tab.on{height:28px;margin-top:0;background:#fff;border-right:1px solid #dcdcdc;line-height:30px}
        .panel{height:492px;margin-top:-1px;background:#fff;border:1px solid #dcdcdc;padding:17px 11px 0 13px}
        .addr{display:flex;align-items:center;height:18px}
        .box{width:16px;height:16px;border:1px solid #333;background:#fff;margin:0 5px 0 17px}
        .caret{width:0;height:0;border:5px solid transparent;border-top:5px solid #111;border-bottom:0;margin-left:7px}
        .area{display:flex;justify-content:flex-end;height:135px;margin-top:9px;border:1px solid #7a7a7a;padding:0 1px}
        .sets{display:flex;gap:15px;margin-top:31px}
        .p{width:300px;height:190px;padding:8px 0 0 13px}
        .l{width:253px;height:190px;padding:7px 0 0 13px}
        .p w-radio{display:flex}
        .rc{display:flex;align-items:center;margin:5px 0 0 24px;color:#8a8a8a}
        .rc w-spin{width:66px;height:25px}
        .l div{line-height:21px}
        .l .sheet{display:flex;flex-direction:column;gap:8px;width:182px;height:46px;margin:36px 0 0 22px;padding:8px 0 0 8px;border:1px solid #111;border-radius:6px}
        .sheet i{display:block;width:137px;height:1px;background:#111}
        .note{margin-top:18px;line-height:18px}
        .btns{display:flex;gap:15px;margin-top:14px;padding-right:1px}
      `,`
      <w-dialog heading="Envelopes and Labels">
        <div class="b">
          <div class="tabs"><div class="tab"><u>E</u>nvelopes</div><div class="tab on"><u>L</u>abels</div></div>
          <div class="panel">
            <div class="addr"><span style="margin-right:auto"><u>A</u>ddress:</span>
              <svg width="20" height="18" viewBox="0 0 20 18"><path d="M.5 1.500H9.500L10 2.500L10.500 1.500H18V16.500H.5Z" fill="#fff" stroke="#5560b0"/><path d="M3 5h5M3 8h5M3 11h5M12 5h5M12 8h5M12 11h5M10 2.500V16" stroke="#8a8fc0" fill="none"/><rect x="18" y="3" width="2" height="5" fill="#d33"/><rect x="18" y="10" width="2" height="4" fill="#55a"/></svg>
              <span class="caret"></span><span class="box"></span><span>Use <u>r</u>eturn address</span><span style="width:5px"></span></div>
            <div class="area"><w-scroll></w-scroll></div>
            <div class="sets">
              <fieldset class="p"><legend>Print</legend>
                <w-radio on><u>F</u>ull page of the same label</w-radio>
                <w-radio style="margin-top:8px">Si<u>n</u>gle label</w-radio>
                <div class="rc"><span style="width:42px">Row:</span><w-spin value="1" disabled></w-spin><span style="width:61px;margin-left:14px">Column:</span><w-spin value="1" disabled></w-spin></div>
              </fieldset>
              <fieldset class="l"><legend>Label</legend>
                <div>Avery US Letter, 5161 Address Labels</div>
                <div>Address Labels</div>
                <div class="sheet"><i></i><i></i><i></i><i></i></div>
              </fieldset>
            </div>
            <div class="note">Before printing, insert labels in your printer's manual feeder.</div>
            <div class="btns">
              <w-btn w="112"><u>P</u>rint</w-btn>
              <w-btn w="132">New <u>D</u>ocument</w-btn>
              <w-btn w="112" style="margin-left:auto"><u>O</u>ptions...</w-btn>
              <w-btn w="159">E-pos<u>t</u>age Properties...</w-btn>
            </div>
          </div>
          <div style="display:flex;justify-content:flex-end;margin-top:13px"><w-btn w="111">Cancel</w-btn></div>
        </div>
      </w-dialog>`);
    }
  }

  class LabelDetailsDialog extends HTMLElement {
    connectedCallback(){
      const arrow = (x,y,dir)=>{
        const p = {r:`${x},${y} ${x-5},${y-3} ${x-5},${y+3}`, l:`${x},${y} ${x+5},${y-3} ${x+5},${y+3}`,
                   u:`${x},${y} ${x-3},${y+5} ${x+3},${y+5}`, d:`${x},${y} ${x-3},${y-5} ${x+3},${y-5}`}[dir];
        return `<polygon points="${p}" fill="#000"/>`;
      };
      const tx = (x,y,s)=>`<text x="${x}" y="${y+4.500}" font-size="12.500" fill="#111">${s}</text>`;
      const diagram = `
        <svg width="531" height="208" viewBox="1685 463 531 208" font-family='${FONT}'>
          <rect x="1804" y="520" width="332" height="108" fill="#c0c0c0"/>
          <g fill="#fff">
            <rect x="1814.500" y="552" width="249" height="61" rx="4"/><rect x="2075" y="552" width="90" height="61" rx="4"/>
            <rect x="1814.500" y="614" width="249" height="30" rx="4"/><rect x="2075" y="614" width="90" height="30" rx="4"/>
            <rect x="1800" y="628" width="345" height="20"/>
          </g>
          <g fill="none" stroke="#000">
            <path d="M1756 520.500H1804M1755 552.500H1812M1755 613.500H1812M1805 505V519"/>
            <path d="M1818 552.500H2059M2079 552.500H2136M2063.500 556V609M2075.500 556V609M1814.500 556V609M1814.500 500V548M2075.500 498V548M2063.500 617V628M2075.500 617V628M1814.500 617V628"/>
            <path d="M1818 613.500H2060M2079 613.500H2136" stroke-width="2"/>
            <path d="M1815 505.500H1875M1969 505.500H2075M1809.500 502V508M1750.500 520V535.500H1768M1760.500 553V577M1760.500 589V612"/>
            <path d="M1815 572.500H1875M1911 572.500H2064M2001.500 553V586M2001.500 598V612M2160.500 520V556M2160.500 590V628M1804 636.500H1870M1962 636.500H2136"/>
          </g>
          ${arrow(1815,505.500,"l")}${arrow(2075,505.500,"r")}${arrow(1809.500,511,"d")}${arrow(1771,535.500,"r")}
          ${arrow(1760.500,552,"u")}${arrow(1760.500,613,"d")}${arrow(1815,572.500,"l")}${arrow(2064,572.500,"r")}
          ${arrow(2001.500,552,"u")}${arrow(2001.500,613,"d")}${arrow(2160.500,631,"d")}${arrow(2138,636.500,"r")}
          ${tx(1771,495,"Side margins")}${tx(1731,512,"Top margin")}${tx(1876,509,"Horizontal pitch")}
          ${tx(1724,582,"Vertical pitch")}${tx(1876,575,"Width")}${tx(1985,592,"Height")}
          ${tx(2137,566,"Number")}${tx(2137,583,"down")}${tx(1871,639,"Number across")}
        </svg>`;
      shadow(this, `
        :host{position:absolute;left:1657px;top:385px;width:573px;height:577px;z-index:6}
        .b{display:flex;flex-direction:column;padding:9px 5px 0 5px}
        .prev{width:533px;height:210px;margin:8px 0 0 14px;background:#fff;border:1px solid #000}
        svg{display:block}
        .grid{display:grid;grid-template-columns:141px 111px 46px 138px 111px;row-gap:4px;margin-top:21px;align-items:center;white-space:nowrap}
        .grid>span{line-height:18px}
        .grid>.name{grid-column:2 / -1;height:26px;background:#fff;border:1px solid #a8a8a8;line-height:24px;padding-left:2px}
        .name i{font-style:normal;box-shadow:-1px 0 #000}
        .wide{grid-column:2 / -1}
        .r{grid-column:4}
        .btns{display:flex;justify-content:flex-end;gap:15px;margin-top:15px;padding-right:1px}
      `,`
      <w-dialog heading="Label Details" marked>
        <div class="b">
          <w-head>Preview</w-head>
          <div class="prev">${diagram}</div>
          <div class="grid">
            <span><u>L</u>abel name:</span><span class="name"><i>5</i>161 Address Labels</span>
            <span><u>T</u>op margin:</span><w-spin value='0.5"'></w-spin><span class="r">Label h<u>e</u>ight:</span><w-spin value='1"'></w-spin>
            <span><u>S</u>ide margin:</span><w-spin value='0.17"'></w-spin><span class="r">Label <u>w</u>idth:</span><w-spin value='4"'></w-spin>
            <span><u>V</u>ertical pitch:</span><w-spin value='1"'></w-spin><span class="r">Number <u>a</u>cross:</span><w-spin value="2"></w-spin>
            <span>H<u>o</u>rizontal pitch:</span><w-spin value='4.19"'></w-spin><span class="r">Number <u>d</u>own:</span><w-spin value="10"></w-spin>
            <span>Page si<u>z</u>e:</span><w-select class="wide">Letter</w-select>
            <span><u>P</u>age width:</span><w-spin value='8.5"' disabled></w-spin><span class="r">Page <u>H</u>eight:</span><w-spin value='11"' disabled></w-spin>
          </div>
          <div class="btns"><w-btn w="112" primary>OK</w-btn><w-btn w="112">Cancel</w-btn></div>
        </div>
      </w-dialog>`);
    }
  }

  class RedBox extends HTMLElement {
    connectedCallback(){
      shadow(this, `:host{position:absolute;z-index:7;border:8px solid #ed1c24;border-radius:3px;pointer-events:none}`,``);
    }
  }

  class StepBadge extends HTMLElement {
    connectedCallback(){
      shadow(this, `:host{position:absolute;z-index:7;display:flex;align-items:center;justify-content:center;width:68px;height:68px;border-radius:50%;
        background:#ed1c24;color:#fff;font-family:"Liberation Sans",sans-serif;font-weight:700;font-size:43px;box-shadow:1px 2px 4px rgba(0,0,0,.28)}`,
        `<span>${this.getAttribute("n")}</span>`);
    }
  }

  customElements.define("word-app",WordApp);
  customElements.define("word-titlebar",WordTitlebar);
  customElements.define("word-tabs",WordTabs);
  customElements.define("word-ribbon",WordRibbon);
  customElements.define("r-group",RGroup);
  customElements.define("r-btn",RBtn);
  customElements.define("r-caret",RCaret);
  customElements.define("r-stack",RStack);
  customElements.define("r-small",RSmall);
  customElements.define("r-nav",RNav);
  customElements.define("word-ruler",WordRuler);
  customElements.define("word-workspace",WordWorkspace);
  customElements.define("word-status",WordStatus);
  customElements.define("w-dialog",WDialog);
  customElements.define("w-btn",WBtn);
  customElements.define("w-head",WHead);
  customElements.define("w-radio",WRadio);
  customElements.define("w-spin",WSpin);
  customElements.define("w-select",WSelect);
  customElements.define("w-scroll",WScroll);
  customElements.define("label-options-dialog",LabelOptionsDialog);
  customElements.define("envelopes-dialog",EnvelopesDialog);
  customElements.define("label-details-dialog",LabelDetailsDialog);
  customElements.define("red-box",RedBox);
  customElements.define("step-badge",StepBadge);
})();
</script>
</body>
</html>
